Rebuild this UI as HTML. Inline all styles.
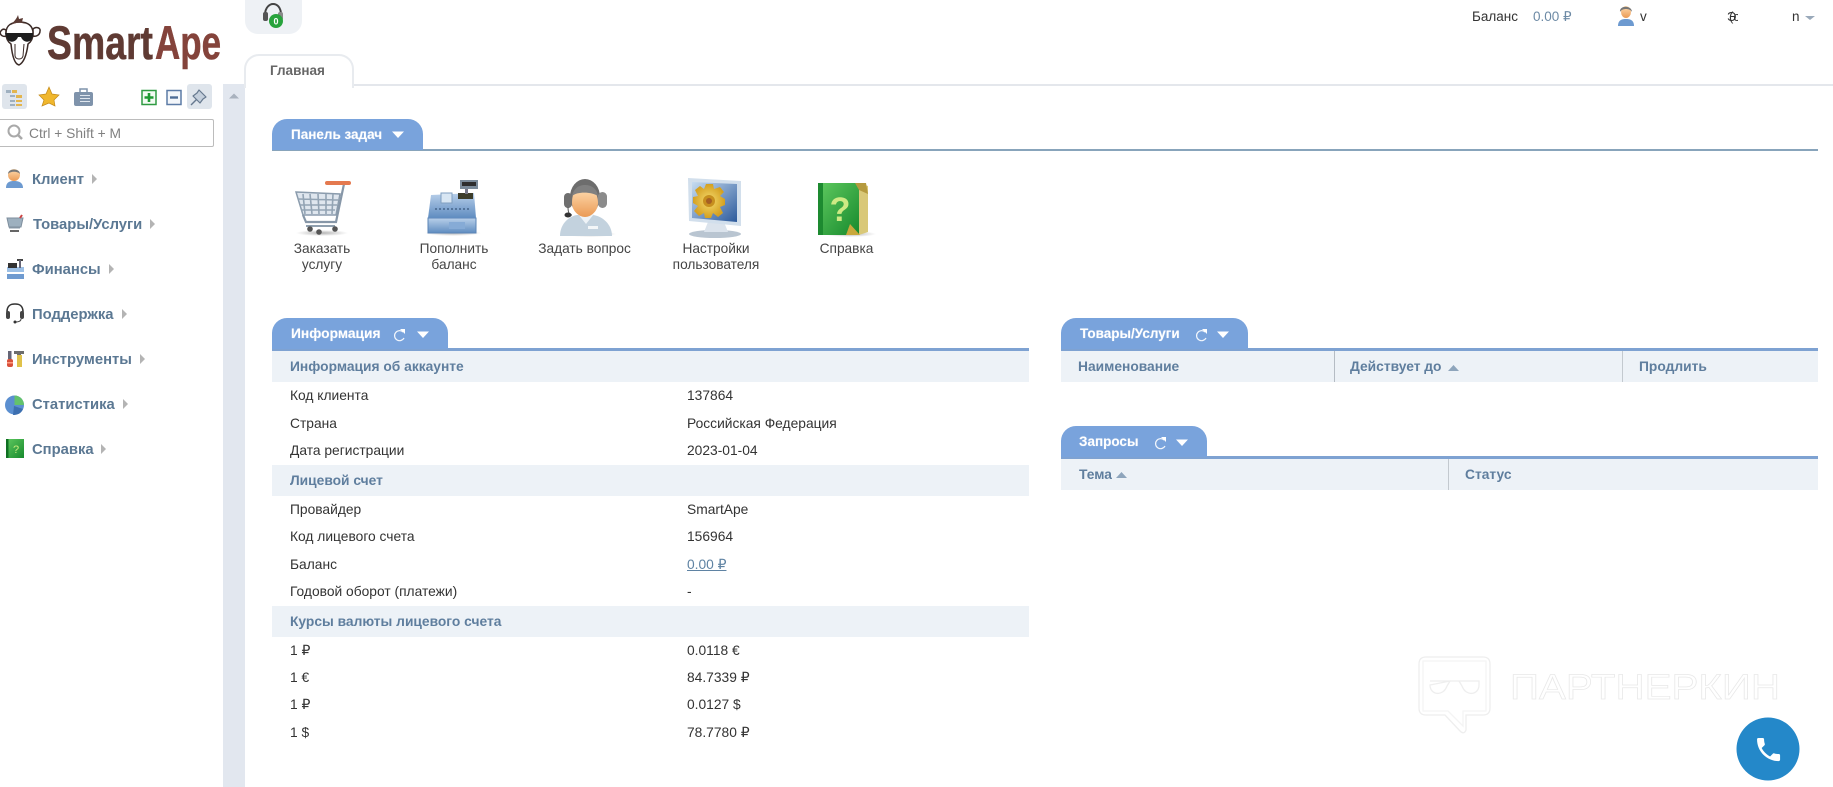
<!DOCTYPE html>
<html lang="ru"><head><meta charset="utf-8"><title>SmartApe</title>
<style>
html,body{margin:0;padding:0;width:1833px;height:787px;overflow:hidden;background:#fff}
body{position:relative;font-family:"Liberation Sans",Arial,sans-serif;font-size:13.8px;color:#333;filter:blur(.3px)}
.a{position:absolute}
.t{position:absolute;white-space:nowrap;line-height:16px;height:16px;margin-top:1px}
.m{font-weight:bold;color:#5b7893;font-size:14.8px;left:32px}
.band{position:absolute;background:#edf2f7}
.h{font-weight:bold;color:#5f7e9e}
.tab{position:absolute;background:#79a3dc;border-radius:15px 15px 0 0}
.w{color:#fff;font-weight:bold;text-shadow:0 0 1px rgba(255,255,255,.5)}
.c{text-align:center;transform:translateX(-50%);color:#444;line-height:16px;height:auto;font-size:13.7px}
svg{position:absolute;left:0;top:0}
</style></head><body>

<!-- sidebar strip -->
<div class="a" style="left:223px;top:84px;width:22px;height:703px;background:#e2e7ef"></div>
<!-- top headset button -->
<div class="a" style="left:245px;top:0;width:57px;height:34px;background:#eef1f5;border-radius:0 0 13px 13px"></div>
<!-- main tab -->
<div class="a" style="left:245px;top:84px;width:1588px;height:2px;background:#e4e7ec"></div>
<div class="a" style="left:244px;top:54px;width:106px;height:32px;background:#fff;border:2px solid #e8ebef;border-bottom:0;border-radius:15px 15px 0 0"></div>
<div class="t" style="left:270px;top:62px;font-size:13.5px;font-weight:bold;color:#666">Главная</div>

<!-- top right -->
<div class="t" style="left:1472px;top:8px;font-size:13.500px;color:#333">Баланс</div>
<div class="t" style="left:1533px;top:8px;font-size:13.500px;color:#6d8aa5">0.00 ₽</div>
<div class="t" style="left:1640px;top:8px;font-size:13.500px">v</div>
<div class="a" style="left:1727px;top:6px;width:11px;height:20px;overflow:hidden"><div class="t" style="left:0;top:2px;font-size:13px">Э</div><div class="t" style="left:2px;top:2px;font-size:13px">(с</div></div>
<div class="t" style="left:1792px;top:8px;font-size:13.500px">n</div>

<!-- search -->
<div class="a" style="left:-2px;top:119px;width:214px;height:26px;border:1px solid #bcbcbc;border-radius:2px;background:#fff"></div>
<div class="t" style="left:29px;top:125px;color:#808080;font-size:13.8px">Ctrl + Shift + M</div>

<!-- toolbar button backgrounds -->
<div class="a" style="left:2px;top:84px;width:25px;height:25px;background:#dfe5ec;border-radius:3px"></div>
<div class="a" style="left:187px;top:84px;width:25px;height:25px;background:#dfe5ec;border-radius:3px"></div>

<!-- sidebar menu -->
<div class="t m" style="top:171px">Клиент</div>
<div class="t m" style="top:216px;left:33px">Товары/Услуги</div>
<div class="t m" style="top:261px">Финансы</div>
<div class="t m" style="top:306px">Поддержка</div>
<div class="t m" style="top:351px">Инструменты</div>
<div class="t m" style="top:396px">Статистика</div>
<div class="t m" style="top:441px">Справка</div>

<!-- panel: tasks -->
<div class="a" style="left:272px;top:149px;width:1546px;height:2px;background:#88a4bb"></div>
<div class="tab" style="left:272px;top:119px;width:151px;height:31px"></div>
<div class="t w" style="left:291px;top:126px;font-size:13.500px">Панель задач</div>
<div class="t c" style="left:322px;top:240px">Заказать<br>услугу</div>
<div class="t c" style="left:454px;top:240px">Пополнить<br>баланс</div>
<div class="t c" style="left:584.5px;top:240px">Задать вопрос</div>
<div class="t c" style="left:716px;top:240px">Настройки<br>пользователя</div>
<div class="t c" style="left:846.5px;top:240px">Справка</div>

<!-- panel: info -->
<div class="a" style="left:272px;top:348px;width:757px;height:3px;background:#7ea2d2"></div>
<div class="tab" style="left:272px;top:318px;width:176px;height:31px"></div>
<div class="t w" style="left:291px;top:325px;font-size:13.8px">Информация</div>
<div class="band" style="left:272px;top:351px;width:757px;height:31px"></div>
<div class="t h" style="left:290px;top:358px">Информация об аккаунте</div>
<div class="t" style="left:290px;top:387px">Код клиента</div><div class="t" style="left:687px;top:387px">137864</div>
<div class="t" style="left:290px;top:415px">Страна</div><div class="t" style="left:687px;top:415px">Российская Федерация</div>
<div class="t" style="left:290px;top:442px">Дата регистрации</div><div class="t" style="left:687px;top:442px">2023-01-04</div>
<div class="band" style="left:272px;top:465px;width:757px;height:31px"></div>
<div class="t h" style="left:290px;top:472px">Лицевой счет</div>
<div class="t" style="left:290px;top:501px">Провайдер</div><div class="t" style="left:687px;top:501px">SmartApe</div>
<div class="t" style="left:290px;top:528px">Код лицевого счета</div><div class="t" style="left:687px;top:528px">156964</div>
<div class="t" style="left:290px;top:556px">Баланс</div><div class="t" style="left:687px;top:556px;color:#5f83a3;text-decoration:underline">0.00 ₽</div>
<div class="t" style="left:290px;top:583px">Годовой оборот (платежи)</div><div class="t" style="left:687px;top:583px">-</div>
<div class="band" style="left:272px;top:606px;width:757px;height:31px"></div>
<div class="t h" style="left:290px;top:613px">Курсы валюты лицевого счета</div>
<div class="t" style="left:290px;top:642px">1 ₽</div><div class="t" style="left:687px;top:642px">0.0118 €</div>
<div class="t" style="left:290px;top:669px">1 €</div><div class="t" style="left:687px;top:669px">84.7339 ₽</div>
<div class="t" style="left:290px;top:696px">1 ₽</div><div class="t" style="left:687px;top:696px">0.0127 $</div>
<div class="t" style="left:290px;top:724px">1 $</div><div class="t" style="left:687px;top:724px">78.7780 ₽</div>

<!-- panel: goods -->
<div class="a" style="left:1061px;top:348px;width:757px;height:3px;background:#7ea2d2"></div>
<div class="tab" style="left:1061px;top:318px;width:187px;height:31px"></div>
<div class="t w" style="left:1080px;top:325px;font-size:13.500px">Товары/Услуги</div>
<div class="band" style="left:1061px;top:351px;width:757px;height:31px"></div>
<div class="a" style="left:1334px;top:351px;width:1px;height:31px;background:#b5bcc4"></div>
<div class="a" style="left:1622px;top:351px;width:1px;height:31px;background:#c3c9cf"></div>
<div class="t h" style="left:1078px;top:358px">Наименование</div>
<div class="t h" style="left:1350px;top:358px">Действует до</div>
<div class="t h" style="left:1639px;top:358px">Продлить</div>

<!-- panel: requests -->
<div class="a" style="left:1061px;top:456px;width:757px;height:3px;background:#7ea2d2"></div>
<div class="tab" style="left:1061px;top:426px;width:146px;height:31px"></div>
<div class="t w" style="left:1079px;top:433px;font-size:13.500px">Запросы</div>
<div class="band" style="left:1061px;top:459px;width:757px;height:31px"></div>
<div class="a" style="left:1448px;top:459px;width:1px;height:31px;background:#c3c9cf"></div>
<div class="t h" style="left:1079px;top:466px">Тема</div>
<div class="t h" style="left:1465px;top:466px">Статус</div>

<svg width="1833" height="787" viewBox="0 0 1833 787">
<defs>
<linearGradient id="gb" x1="0" y1="0" x2="0" y2="1"><stop offset="0" stop-color="#b9d0ea"/><stop offset="1" stop-color="#5f8cc0"/></linearGradient>
<linearGradient id="gg" x1="0" y1="0" x2="1" y2="1"><stop offset="0" stop-color="#5fc95f"/><stop offset="1" stop-color="#178a2d"/></linearGradient>
<linearGradient id="gs" x1="0" y1="0" x2="0" y2="1"><stop offset="0" stop-color="#ffdcb0"/><stop offset="1" stop-color="#ea9a55"/></linearGradient>
<linearGradient id="gm" x1="0" y1="0" x2="1" y2="1"><stop offset="0" stop-color="#c7dcf0"/><stop offset="1" stop-color="#2c5a9c"/></linearGradient>
<radialGradient id="gy"><stop offset="0" stop-color="#f5dc70"/><stop offset="1" stop-color="#d4a020"/></radialGradient>
<radialGradient id="gsh"><stop offset="0" stop-color="#555" stop-opacity=".45"/><stop offset="1" stop-color="#555" stop-opacity="0"/></radialGradient>
</defs>

<!-- logo monkey -->
<g fill="#fff" stroke="#3a2a26" stroke-width="1.5" stroke-linejoin="round">
<path d="M6 30C3 28 1 30 0 33C1 36 4 37 6 36Z"/>
<path d="M33 29C36 26 41 28 40 31C40 35 36 37 33 36Z"/>
<path d="M6 33C6 25 12 22 20 22C28 22 33 26 33 33C33 38 31 42 28 44C27 52 25 62 19 65C14 64 12 54 11 44C8 42 6 38 6 33Z"/>
<path d="M15 44L15 56C16 60 22 60 23 56L24 44" fill="none" stroke-width="1"/>
</g>
<path d="M11 25C14 21 16 20 18 15L19 19L23 18L22 22L28 25C22 22 16 22 11 25Z" fill="#5a3a33"/>
<path d="M5 33H33V36L31 40C28 43 23 42 21 37H18C16 42 11 43 8 40L6 36Z" fill="#1e1e1e"/>
<!-- logo text -->
<text x="47" y="59" font-family="'Liberation Sans',sans-serif" font-weight="bold" font-size="47" fill="#5f3a33" stroke="#5f3a33" stroke-width=".5" textLength="106" lengthAdjust="spacingAndGlyphs">Smart</text>
<text x="155" y="59" font-family="'Liberation Sans',sans-serif" font-weight="bold" font-size="47" fill="#84433b" stroke="#84433b" stroke-width=".5" textLength="66" lengthAdjust="spacingAndGlyphs">Ape</text>

<!-- headset top -->
<g>
<path d="M265 15C265 7 270 4 273 4C277 4 281 7 281 15" fill="none" stroke="#444" stroke-width="2"/>
<rect x="263" y="12" width="5" height="9" rx="2" fill="#555"/><rect x="278" y="12" width="5" height="8" rx="2" fill="#888"/>
<circle cx="276" cy="21" r="7" fill="#27a33c"/>
<text x="276" y="24.5" text-anchor="middle" font-family="'Liberation Sans',sans-serif" font-weight="bold" font-size="9" fill="#fff">0</text>
</g>

<!-- strip arrow -->
<path d="M229 98.500L234 93.500L239 98.500Z" fill="#a9b2be"/>

<!-- toolbar -->
<g>
<g fill="#9fb0c0"><rect x="6" y="90" width="5" height="3"/><rect x="10" y="95" width="5" height="2"/><rect x="10" y="100" width="5" height="2"/><rect x="10" y="104" width="5" height="2"/></g>
<g fill="#e3b54e"><rect x="12" y="90" width="5" height="3"/><rect x="16" y="95" width="6" height="3"/><rect x="16" y="100" width="6" height="2"/><rect x="16" y="104" width="6" height="2"/></g>
<path d="M49 87L52 94L59 95L54 100L55 106L49 103L42 106L44 100L39 95L46 94Z" fill="#f0b72d" stroke="#c48a18" stroke-width=".7"/>
<rect x="74" y="92" width="19" height="14" rx="2" fill="#7f93ab"/><rect x="80" y="89" width="7" height="4" fill="none" stroke="#7f93ab" stroke-width="1.5"/><g fill="#dfe6ee"><rect x="80" y="95" width="10" height="1"/><rect x="80" y="98" width="10" height="1"/><rect x="80" y="101" width="10" height="1"/></g>
<rect x="142" y="90.5" width="14" height="14" fill="#f3fbf3" stroke="#2f9a42" stroke-width="1.5"/><path d="M149 93V102M144.5 97.5H153.5" stroke="#1f9a33" stroke-width="2.6"/>
<rect x="167" y="90.5" width="14" height="14" fill="#f3f6fa" stroke="#5c7ba6" stroke-width="1.5"/><path d="M170 97.5H178" stroke="#4e6d96" stroke-width="2.4"/>
<!-- pin -->
<path d="M191 105L197 99" stroke="#66798f" stroke-width="1.4"/>
<path d="M199 90L206 97L203 99L200 103L193 96L197 93Z" fill="#c4cfdc" stroke="#66798f" stroke-width="1.2" stroke-linejoin="round"/>
<!-- magnifier -->
<circle cx="14" cy="131" r="5.5" fill="none" stroke="#a9a9a9" stroke-width="2"/><path d="M18 135L22 139" stroke="#a9a9a9" stroke-width="2.5"/>
</g>

<!-- sidebar icons -->
<g>
<ellipse cx="14" cy="175" rx="6" ry="6" fill="url(#gs)"/><path d="M8 174C8 168 20 168 20 174C18 171 10 171 8 174Z" fill="#777"/><path d="M6 188C6 182 10 181 14 181C18 181 23 182 23 188Z" fill="#6d9ad0"/>
<path d="M7 218H23L21 227H9Z" fill="#9db0bf" stroke="#7e8e9d"/><path d="M9 228H20" stroke="#8a9aa8"/><path d="M10 231H19" stroke="#666" stroke-width="2"/><path d="M20 218L22 215" stroke="#c44" stroke-width="2"/>
<rect x="7" y="267" width="17" height="5" fill="#9cc0e6"/><rect x="7" y="274" width="17" height="5" fill="#6f9bd0"/><rect x="8" y="263" width="9" height="5" fill="#333"/><rect x="17" y="259" width="6" height="2" fill="#444"/><rect x="19" y="260" width="2" height="8" fill="#667"/>
<path d="M7 312C7 305 11 304 15 304C19 304 23 305 23 312" fill="none" stroke="#333" stroke-width="1.6"/><rect x="6" y="311" width="4" height="8" rx="2" fill="#444"/><rect x="20" y="311" width="4" height="8" rx="2" fill="#444"/><path d="M15 322C19 322 21 321 21 319" fill="none" stroke="#444"/><circle cx="15" cy="322" r="1.5" fill="#333"/>
<rect x="8" y="351" width="3.5" height="8" fill="#667"/><rect x="7" y="359" width="6" height="8" rx="2" fill="#d8503a"/><rect x="7" y="362" width="6" height="1.5" fill="#ff9a80"/><path d="M14 351H24L24 354H21V367H17V354H14Z" fill="#6d6d6d"/><rect x="17" y="355" width="5" height="12" fill="#e0c24a"/>
<circle cx="14.5" cy="405" r="9.5" fill="#5b8fd0"/><path d="M14.5 405V395.5A9.5 9.5 0 0 1 24 405Z" fill="#63c26b"/><path d="M14 406L23 409C21 414 17 415 13 415" fill="#3c6fb0"/>
<rect x="6" y="439" width="18" height="19" fill="url(#gg)"/><rect x="6" y="439" width="2.5" height="19" fill="#0f6f22"/><text x="16" y="453" text-anchor="middle" font-family="'Liberation Sans',sans-serif" font-size="11" fill="#c7ec7c">?</text>
</g>
<g fill="#b4b4b4">
<path d="M92 174V184L97 179Z"/><path d="M150 219V229L155 224Z"/><path d="M109 264V274L114 269Z"/><path d="M122 309V319L127 314Z"/><path d="M140 354V364L145 359Z"/><path d="M123 399V409L128 404Z"/><path d="M101 444V454L106 449Z"/>
</g>

<!-- top right user + caret -->
<ellipse cx="1626" cy="12" rx="5" ry="6" fill="url(#gs)"/><path d="M1620 12C1619 5 1632 5 1632 12C1630 8 1622 8 1620 12Z" fill="#777"/><path d="M1618 26C1618 20 1622 19 1626 19C1630 19 1634 20 1634 26Z" fill="#6d9ad0"/>
<path d="M1805 16H1815L1810 20Z" fill="#9aa9ba"/>

<!-- cart -->
<ellipse cx="322" cy="233" rx="26" ry="3" fill="url(#gsh)"/>
<path d="M296 192L340 194L336 215L303 215Z" fill="#dfe6ee" stroke="#8b9cad" stroke-width="1.5"/>
<path d="M303 194L305 214M310 194L312 214M318 194L319 214M326 194L326 214M333 194L332 214M298 199L338 200M300 205L337 205M301 210L335 210" stroke="#93a4b4" stroke-width="1.6" fill="none"/>
<path d="M344 184L336 222H306L303 215" fill="none" stroke="#8797a8" stroke-width="2.2"/>
<path d="M306 226H335" stroke="#8f9fae" stroke-width="2"/>
<path d="M327 183H349" stroke="#e4794f" stroke-width="4" stroke-linecap="round"/>
<circle cx="310" cy="229" r="2.8" fill="#555"/><circle cx="319" cy="232" r="2.8" fill="#555"/><circle cx="335" cy="229" r="2.8" fill="#555"/>

<!-- register -->
<ellipse cx="453" cy="233" rx="28" ry="3" fill="url(#gsh)"/>
<path d="M428 218H476V233H428Z" fill="url(#gb)" stroke="#5b84b6"/>
<path d="M431 195L474 193L476 218H428Z" fill="url(#gb)"/>
<rect x="441" y="193" width="11" height="10" fill="#d8e6f3" stroke="#7f9fc0"/>
<rect x="458" y="193" width="15" height="6" fill="#3c3c2a"/>
<path d="M435 209H470" stroke="#53749c" stroke-width="2" stroke-dasharray="2 2"/>
<path d="M449 222H465V229H449Z" fill="#86abd6"/>
<rect x="465" y="189" width="3" height="5" fill="#778"/>
<rect x="460" y="180" width="18" height="9" fill="#7a8a99"/><rect x="462" y="182" width="14" height="4" fill="#2d2d2d"/>

<!-- operator -->
<ellipse cx="590" cy="234" rx="26" ry="3" fill="url(#gsh)"/>
<path d="M560 236C560 223 570 216 577 215H593C602 216 612 224 612 236Z" fill="#c3d2de"/>
<path d="M578 214L586 224L594 214Z" fill="#eef3f7"/>
<rect x="588" y="226" width="10" height="3" fill="#f3f6f8"/>
<ellipse cx="585" cy="197" rx="15" ry="18" fill="#6d6d6d"/>
<path d="M572 203C572 192 576 188 585 188C594 188 598 194 598 203C598 211 591 217 585 217C579 217 572 211 572 203Z" fill="url(#gs)"/>
<path d="M572 196C574 188 579 185 585 185C592 185 597 189 598 196C592 192 578 191 572 196Z" fill="#808080"/>
<rect x="564" y="193" width="8" height="15" rx="4" fill="#6f6f6f"/><rect x="598" y="192" width="9" height="16" rx="4.5" fill="#8b8b8b"/>
<path d="M568 207C568 214 570 215 572 215" stroke="#555" fill="none"/><ellipse cx="568" cy="215" rx="3.5" ry="2.5" fill="#333"/>

<!-- monitor -->
<ellipse cx="715" cy="234" rx="26" ry="4" fill="#b9c5d1"/>
<path d="M708 222H724L728 232H704Z" fill="#dbe3ec"/>
<path d="M688 178L741 181V226L689 221Z" fill="#d2dfec"/>
<path d="M692 182L737 184V222L692 218Z" fill="url(#gm)"/>
<g transform="translate(709 201)">
<path d="M-3-17H4L5-12L11-14L15-9L11-5L16-2V4L11 6L14 12L9 16L4 12L2 17H-4L-5 12L-10 15L-15 10L-11 5L-16 2V-4L-11-5L-14-11L-9-15L-5-12Z" fill="url(#gy)"/>
<circle r="6" fill="#c78f1e"/><circle r="3" fill="#a55f24"/>
</g>

<!-- book -->
<ellipse cx="850" cy="234" rx="26" ry="3" fill="url(#gsh)"/>
<path d="M818 183H859V235H818Z" fill="url(#gg)"/>
<path d="M818 183H823V235H818Z" fill="#1d8a30"/>
<path d="M859 183L868 186V232L859 235Z" fill="#d9c878"/>
<path d="M855 183H866L868 194L859 190Z" fill="#b59a3f"/>
<path d="M850 224L860 235H846Z" fill="#c9a83c"/>
<text x="840" y="221" text-anchor="middle" font-family="'Liberation Sans',sans-serif" font-weight="bold" font-size="34" fill="#cdea84">?</text>

<!-- tab carets & refresh -->
<g fill="#fff">
<path d="M392 131.500H404L398 138Z"/>
<path d="M417 331.500H429L423 338Z"/>
<path d="M1217 331.500H1229L1223 338Z"/>
<path d="M1176 439.500H1188L1182 446Z"/>
</g>
<g fill="none" stroke="#fff" stroke-width="1.2" opacity=".9">
<path d="M403 332A5 5 0 1 0 404 338"/><path d="M1205 332A5 5 0 1 0 1206 338"/><path d="M1164 440A5 5 0 1 0 1165 446"/>
</g>
<g fill="#fff"><path d="M400 329L405 329L405 334Z"/><path d="M1202 329L1207 329L1207 334Z"/><path d="M1161 437L1166 437L1166 442Z"/></g>
<!-- sort -->
<g fill="#8ea5bc"><path d="M1448 371H1459L1453.500 365Z"/><path d="M1116 478H1127L1121.500 472Z"/></g>

<!-- watermark -->
<g fill="none" stroke="#eeeeee" stroke-width="1.3">
<path d="M1426 657H1483Q1490 657 1490 664V708Q1490 715 1483 715H1466V730Q1464 735 1460 731L1445 715H1426Q1419 715 1419 708V664Q1419 657 1426 657Z"/>
<path d="M1423 661H1486V711H1463V726L1448 711H1423Z" stroke="#f4f4f4"/>
<path d="M1430 681H1479V685C1479 695 1466 697 1462 686L1459 681M1450 681L1447 686C1443 697 1430 695 1430 685Z"/>
</g>
<text x="1510" y="699" font-family="'Liberation Sans',sans-serif" font-size="35" fill="#fff" stroke="#e8e8e8" stroke-width=".7" textLength="270" lengthAdjust="spacingAndGlyphs">ПАРТНЕРКИН</text>

<!-- phone button -->
<circle cx="1768" cy="749" r="31.500" fill="#2488c9"/>
<g transform="translate(1753.2 734.2) scale(1.28)"><path fill="#fff" d="M6.62 10.79c1.44 2.83 3.76 5.14 6.59 6.59l2.2-2.2c.27-.27.67-.36 1.02-.24 1.12.37 2.33.57 3.57.57.55 0 1 .45 1 1V20c0 .55-.45 1-1 1-9.39 0-17-7.61-17-17 0-.55.45-1 1-1h3.5c.55 0 1 .45 1 1 0 1.25.2 2.45.57 3.57.11.35.03.74-.25 1.02l-2.2 2.2z"/></g>
</svg>
</body></html>
